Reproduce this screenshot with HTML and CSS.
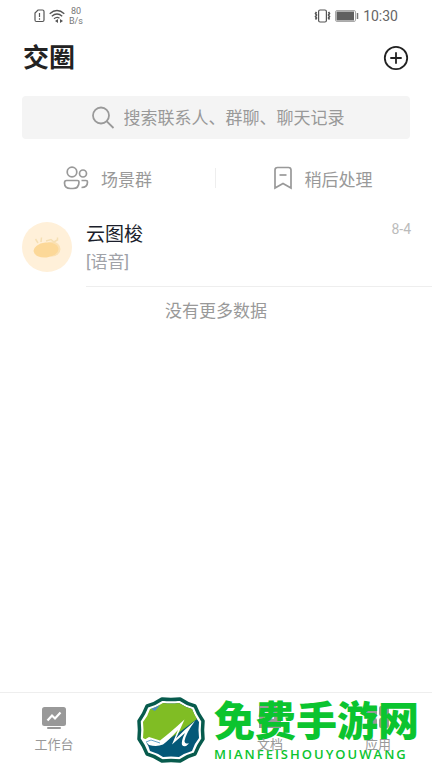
FILE: index.html
```html
<!DOCTYPE html>
<html lang="zh-CN">
<head>
    <meta charset="UTF-8">
    <meta name="viewport" content="width=device-width, initial-scale=1.0">
    <title>交圈</title>
    <link rel="stylesheet" href="styles.css">
</head>
<body>
    <!-- Status bar -->
    <div class="status-bar">
        <div class="status-left">
            <svg width="11" height="14" viewBox="0 0 11 14" fill="none" stroke="#555" stroke-width="1.2">
                <path d="M4 1H8.5Q10 1 10 2.500V11Q10 12.500 8.500 12.500H2.500Q1 12.500 1 11V4Z"/>
                <path d="M5.500 4V8M5.500 9.300V10.700"/>
            </svg>
            <svg width="16" height="14" viewBox="0 0 16 14" fill="none" stroke="#555" stroke-width="1.3">
                <path d="M0.700 4.800Q8-1.800 15.300 4.800M2.800 7.300Q8 2.800 13.200 7.300M5 9.700Q8 7.200 10.500 9.300"/>
                <path d="M6 12L9 10V14ZM14 12L11 10V14Z" fill="#555" stroke="none"/>
            </svg>
            <div class="net-speed"><span>80</span><span>B/s</span></div>
        </div>
        <div class="status-right">
            <svg width="17" height="14" viewBox="0 0 17 14" fill="none" stroke="#555" stroke-width="1.2">
                <rect x="4.600" y="1" width="7.800" height="12" rx="1.500"/>
                <path d="M2.500 3L1.500 4.500L2.500 6L1.500 7.500L2.500 9L1.500 10.500M14.500 3L15.500 4.500L14.500 6L15.500 7.500L14.500 9L15.500 10.500" stroke-width="1.600"/>
            </svg>
            <svg width="24" height="12" viewBox="0 0 24 12">
                <rect x="0.500" y="0.500" width="20" height="11" rx="1.500" fill="#fff" stroke="#aaa"/>
                <rect x="1.500" y="1.500" width="17.500" height="9" fill="#606060"/>
                <path d="M22.500 3V9" stroke="#777" stroke-width="1.500"/>
            </svg>
            <span class="clock">10:30</span>
        </div>
    </div>

    <header class="header">
        <h1>交圈</h1>
        <button class="add-button" aria-label="添加">
            <svg width="26" height="26" viewBox="0 0 26 26" fill="none" stroke="#222" stroke-width="1.8">
                <circle cx="13" cy="13" r="11.200"/>
                <path d="M13 7.300V18.700M7.300 13H18.700"/>
            </svg>
        </button>
    </header>

    <main class="content">
        <label class="search">
            <svg width="24" height="24" viewBox="0 0 24 24" fill="none" stroke="#999" stroke-width="1.8">
                <circle cx="10" cy="9.500" r="8"/>
                <path d="M15.800 15.300L22.500 22"/>
            </svg>
            <input type="text" aria-label="搜索" placeholder="搜索联系人、群聊、聊天记录">
        </label>

        <div class="shortcuts">
            <a href="#" class="shortcut">
                <svg width="26" height="24" viewBox="0 0 26 24" fill="none" stroke="#999" stroke-width="1.7">
                    <circle cx="9" cy="6" r="4.800"/>
                    <circle cx="20" cy="7.500" r="3.500"/>
                    <path d="M3.500 14.500H14.500Q16 14.500 16 16Q16 22.500 10 22.500H7.500Q1.500 22.500 1.500 17Q1.500 14.500 3.500 14.500Z"/>
                    <path d="M18.500 14.500H23Q24.500 14.500 24.500 16Q24.500 21.500 18.500 21.500"/>
                </svg>
                场景群
            </a>
            <a href="#" class="shortcut">
                <svg width="20" height="24" viewBox="0 0 20 24" fill="none" stroke="#999" stroke-width="1.7">
                    <path d="M2 22V4Q2 1.500 4.500 1.500H15.500Q18 1.500 18 4V22L10 17.500Z"/>
                    <path d="M6.500 9H13.500"/>
                </svg>
                稍后处理
            </a>
        </div>

        <!-- Chat list -->
        <ul class="chat-list">
            <li class="chat">
                <svg class="avatar" width="50" height="50" viewBox="0 0 50 50">
                    <circle cx="25" cy="25" r="25" fill="#fff0d9"/>
                    <ellipse cx="30" cy="27" rx="8.500" ry="7.500" fill="#fbe1b4"/>
                    <ellipse cx="24" cy="28" rx="12.500" ry="7.500" fill="#fcd898" transform="rotate(-6 24 28)"/>
                    <path d="M13.500 17L16 21M19.500 15.500L19 20M24 19L29 17.500L32 20L36 17.500M35.500 15.500V18" stroke="#f5dfb4" stroke-width="1.500" fill="none"/>
                </svg>
                <div class="chat-body">
                    <div class="chat-text">
                        <div class="chat-name">云图梭</div>
                        <div class="chat-message">[语音]</div>
                    </div>
                    <time class="chat-date">8-4</time>
                </div>
            </li>
        </ul>
        <p class="no-more">没有更多数据</p>
    </main>

    <footer class="footer">
        <nav class="tabs">
            <a href="#" class="tab">
                <svg width="24" height="24" viewBox="0 0 24 24">
                    <rect x="0" y="1" width="24" height="19" rx="2.500" fill="#999"/>
                    <path d="M5.500 14.500L10 9.500L13 12.500L18.500 6.500" stroke="#fff" stroke-width="2.200" fill="none"/>
                    <rect x="5" y="21" width="14" height="2" rx="1" fill="#999"/>
                </svg>
                <span class="tab-label">工作台</span>
            </a>
            <a href="#" class="tab active">
                <svg width="24" height="24" viewBox="0 0 24 24">
                    <circle cx="12" cy="12" r="10" fill="#3b7fd4"/>
                </svg>
                <span>交圈</span>
            </a>
            <a href="#" class="tab">
                <svg width="24" height="24" viewBox="0 0 24 24" fill="#999">
                    <path d="M1 0H18L23 4V22H1Z"/>
                    <path d="M6 7H16M6 12H16" stroke="#fff" stroke-width="1.500"/>
                </svg>
                <span class="tab-label">文档</span>
            </a>
            <a href="#" class="tab">
                <svg width="24" height="24" viewBox="0 0 24 24" fill="#999">
                    <rect x="1" y="0" width="10" height="10" rx="2"/>
                    <rect x="13" y="0" width="10" height="10" rx="2"/>
                    <rect x="1" y="12" width="10" height="10" rx="2"/>
                    <rect x="13" y="12" width="10" height="10" rx="2"/>
                </svg>
                <span class="tab-label">应用</span>
            </a>
        </nav>

        <!-- Site badge, lies over the tabs -->
        <div class="site-badge">
            <svg width="68" height="68" viewBox="2 2 68 68">
                <path d="M27 5Q36 6 45 5Q52 10 60 12Q63 20 68 27Q67 36 68 45Q63 52 60 60Q52 62 45 67Q36 66 27 67Q20 62 12 60Q9 52 4 45Q5 36 4 27Q9 20 12 12Q20 10 27 5Z" fill="#fff" stroke="#075b4d" stroke-width="3.500" stroke-linejoin="round"/>
                <path d="M28 9Q36 10 44 9Q50 13 57 15Q59 22 64 28Q63 36 64 44Q59 50 57 57Q50 59 44 63Q36 62 28 63Q22 59 15 57Q14 52 11 48Z" fill="#045878"/>
                <path d="M28 9Q36 10 44 9Q50 13 57 15Q59 20 62 25L46 37L31 47L12 46L8 44Q9 36 8 28Q13 22 15 15Q22 13 28 9Z" fill="#80bd24"/>
                <path d="M16 15L25 11L20 17Z" fill="#4f8fc0"/>
                <path d="M9 46L14 43L25 46.500Q36 38 49.500 25.500L41 44.500Q49 36 60 27Q51 39 49.500 47Q49.500 50 54 49.500Q50 54 47 51Q46 47 50 39L37 50.500L43 36Q33 47 28 50.500Q22 53 14 51Z" fill="#fff"/>
                <path d="M11 48L16 46L25 49" stroke="#6aa6cd" fill="none"/>
            </svg>
            <div class="badge-text">
                <strong>免费手游网</strong>
                <span>MIANFEISHOUYOUWANG</span>
            </div>
        </div>
    </footer>
</body>
</html>
```
FILE: styles.css
```css
* {
    box-sizing: border-box;
}

body {
    margin: 0;
    min-height: 100vh;
    display: flex;
    flex-direction: column;
    background-color: #fff;
    color: #999;
    font-family: Roboto, 'Noto Sans CJK SC', sans-serif;
    font-size: 17px;
}

svg {
    display: block;
    flex-shrink: 0;
}

a {
    color: inherit;
    text-decoration: none;
}

.status-bar {
    display: flex;
    justify-content: space-between;
    align-items: center;
    height: 32px;
    padding: 0 34px;
    color: #666;
}

.status-left,
.status-right {
    display: flex;
    align-items: center;
    gap: 4px;
}

.net-speed {
    display: flex;
    flex-direction: column;
    align-items: center;
    font-size: 9px;
    line-height: 10px;
    color: #777;
}

.clock {
    font-size: 14px;
}

.header {
    display: flex;
    justify-content: space-between;
    align-items: center;
    height: 52px;
    padding: 0 23px;
}

.header h1 {
    margin: 0;
    font-size: 26px;
    line-height: 32px;
    font-weight: 700;
    color: #222;
}

.add-button {
    padding: 0;
    border: none;
    background: none;
    cursor: pointer;
}

.content {
    flex: 1;
    padding-top: 12px;
}

.search {
    display: flex;
    justify-content: center;
    align-items: center;
    gap: 9px;
    height: 43px;
    margin: 0 22px;
    padding-left: 4px;
    border-radius: 4px;
    background-color: #f4f4f4;
}

.search input {
    width: 222px;
    padding: 0;
    border: none;
    outline: none;
    background: none;
    font-family: inherit;
    font-size: 17px;
    color: #333;
}

.search input::placeholder {
    color: #999;
    opacity: 1;
}

.shortcuts {
    display: flex;
    height: 78px;
    padding-right: 2px;
}

.shortcut {
    position: relative;
    flex: 1;
    display: flex;
    justify-content: center;
    align-items: center;
    gap: 12px;
}

.shortcut + .shortcut::before {
    content: '';
    position: absolute;
    left: 0;
    height: 20px;
    border-left: 1px solid #eee;
}

.chat-list {
    margin: 0;
    padding: 0;
    list-style: none;
}

.chat {
    display: flex;
    gap: 14px;
    padding-left: 22px;
}

.avatar {
    margin-top: 5px;
}

.chat-body {
    flex: 1;
    display: flex;
    justify-content: space-between;
    height: 70px;
    padding-top: 4px;
    padding-right: 21px;
    border-bottom: 1px solid #eee;
}

.chat-name {
    font-size: 19px;
    line-height: 28px;
    color: #1b1e2b;
}

.chat-message {
    line-height: 26px;
    color: #a0a2a8;
}

.chat-date {
    font-size: 14px;
    line-height: 16px;
    color: #bbb;
}

.no-more {
    margin: 12px 0;
    line-height: 24px;
    text-align: center;
}

.footer {
    position: relative;
    border-top: 1px solid #eee;
}

.tabs {
    display: flex;
    height: 75px;
}

.tab {
    flex: 1;
    display: flex;
    flex-direction: column;
    align-items: center;
    gap: 5px;
    padding-top: 13px;
    font-size: 13px;
    line-height: 20px;
}

.tab.active {
    color: #3b7fd4;
}

.tab-label {
    position: relative;
    z-index: 1;
}

.site-badge {
    position: absolute;
    top: 3px;
    right: 13px;
    display: flex;
    align-items: center;
    gap: 9px;
}

.badge-text {
    display: flex;
    flex-direction: column;
    color: #0bc42f;
}

.badge-text strong {
    font-size: 41px;
    line-height: 48px;
    font-weight: 900;
}

.badge-text span {
    font-family: 'Open Sans', sans-serif;
    font-size: 13px;
    line-height: 16px;
    font-weight: 600;
    letter-spacing: 2px;
}
```
